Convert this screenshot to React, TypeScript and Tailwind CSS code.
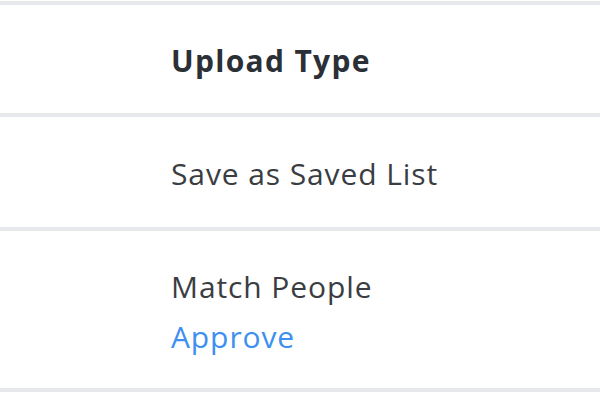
import React from "react";

export default function App() {
  const font = { fontFamily: '"Open Sans", "Noto Sans", sans-serif' };
  return (
    <div className="w-[600px] h-[400px] bg-white overflow-hidden pt-[1px]" style={font}>
      <div className="border-t-[4px] border-[#e6e8eb]">
        <div className="flex h-[108px] items-center pt-[2px]">
          <div className="w-[171px] shrink-0" />
          <div className="text-[30px] font-bold text-[#2b2f36] tracking-[1.3px]">Upload Type</div>
        </div>
      </div>
      <div className="border-t-[4px] border-[#e6e8eb]">
        <div className="flex h-[110px] items-center pt-[2px]">
          <div className="w-[171px] shrink-0" />
          <div className="text-[30px] text-[#3a3d42] tracking-[0.9px]">Save as Saved List</div>
        </div>
      </div>
      <div className="border-t-[4px] border-[#e6e8eb] border-b-[4px]">
        <div className="flex h-[157px] items-center pt-[4px]">
          <div className="w-[171px] shrink-0" />
          <div className="flex flex-col leading-[50px] text-[30px] tracking-[0.9px]">
            <span className="text-[#3a3d42]">Match People</span>
            <span className="text-[#3d8ff0]">Approve</span>
          </div>
        </div>
      </div>
    </div>
  );
}
